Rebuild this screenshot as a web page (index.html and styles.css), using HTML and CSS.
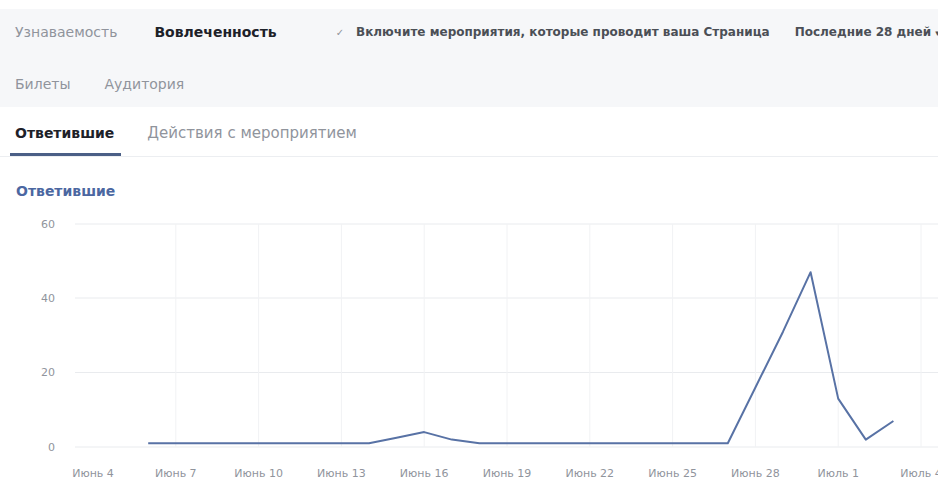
FILE: index.html
```html
<!DOCTYPE html>
<html lang="ru">
<head>
<meta charset="utf-8">
<title>Статистика мероприятий</title>
<link rel="stylesheet" href="styles.css">
</head>
<body>
<header class="insights-head">
  <div class="head-row">
    <nav class="section-nav">
      <a class="section-link">Узнаваемость</a>
      <a class="section-link is-active">Вовлеченность</a>
    </nav>
    <label class="include-toggle"><span class="check">&#10003;</span>Включите мероприятия, которые проводит ваша Страница</label>
    <span class="range-picker">Последние 28 дней <span class="caret">&#9662;</span></span>
  </div>
  <div class="head-row sub-row">
    <a class="section-link">Билеты</a>
    <a class="section-link">Аудитория</a>
  </div>
</header>

<div class="tabs">
  <span class="tab is-active">Ответившие</span>
  <span class="tab">Действия с мероприятием</span>
</div>

<h2 class="chart-title">Ответившие</h2>

<svg class="chart" viewBox="0 200 938 284" width="938" height="284">
  <g class="grid-h">
    <line x1="75" y1="224" x2="938" y2="224"/>
    <line x1="75" y1="298" x2="938" y2="298"/>
    <line x1="75" y1="372.5" x2="938" y2="372.5"/>
    <line x1="75" y1="447" x2="938" y2="447"/>
  </g>
  <g class="grid-v">
    <line x1="175.8" y1="224" x2="175.8" y2="447"/>
    <line x1="258.6" y1="224" x2="258.6" y2="447"/>
    <line x1="341.4" y1="224" x2="341.4" y2="447"/>
    <line x1="424.2" y1="224" x2="424.2" y2="447"/>
    <line x1="507" y1="224" x2="507" y2="447"/>
    <line x1="589.8" y1="224" x2="589.8" y2="447"/>
    <line x1="672.6" y1="224" x2="672.6" y2="447"/>
    <line x1="755.4" y1="224" x2="755.4" y2="447"/>
    <line x1="838.2" y1="224" x2="838.2" y2="447"/>
    <line x1="921" y1="224" x2="921" y2="447"/>
  </g>
  <g class="y-labels">
    <text x="55" y="228">60</text>
    <text x="55" y="302">40</text>
    <text x="55" y="376">20</text>
    <text x="55" y="451">0</text>
  </g>
  <g class="x-labels">
    <text x="93" y="477">Июнь 4</text>
    <text x="175.8" y="477">Июнь 7</text>
    <text x="258.6" y="477">Июнь 10</text>
    <text x="341.4" y="477">Июнь 13</text>
    <text x="424.2" y="477">Июнь 16</text>
    <text x="507" y="477">Июнь 19</text>
    <text x="589.8" y="477">Июнь 22</text>
    <text x="672.6" y="477">Июнь 25</text>
    <text x="755.4" y="477">Июнь 28</text>
    <text x="838.2" y="477">Июль 1</text>
    <text x="921" y="477">Июль 4</text>
  </g>
  <polyline class="series"
    points="148.2,443.3 369,443.3 396.6,437.7 424.2,432.1 451.8,439.6 479.4,443.3 727.8,443.3 755.4,387.5 783,331.7 810.6,272.2 838.2,398.6 865.8,439.6 893.4,421"/>
</svg>
</body>
</html>
```

FILE: styles.css
```css
* { box-sizing: border-box; }

html, body {
  margin: 0;
  padding: 0;
  background: #fff;
  width: 938px;
  height: 484px;
  overflow: hidden;
  font-family: "DejaVu Sans", "Liberation Sans", sans-serif;
  color: #1d2129;
}

a { text-decoration: none; cursor: pointer; }

/* grey header band with section switches */
.insights-head {
  margin-top: 9px;
  background: #f6f7f9;
  height: 98px;
  display: flex;
  flex-direction: column;
}

.head-row {
  display: flex;
  align-items: center;
  height: 46px;
  padding-left: 15px;
  white-space: nowrap;
}

.sub-row {
  height: 52px;
  padding-top: 6px;
  gap: 34px;
}

.section-nav {
  display: flex;
  gap: 37px;
}

.section-link {
  font-size: 14px;
  color: #90949c;
}

.section-link.is-active {
  font-size: 14px;
  font-weight: bold;
  color: #1d2129;
}

.include-toggle {
  margin-left: 59px;
  display: flex;
  align-items: center;
  font-size: 12px;
  font-weight: bold;
  color: #4b4f56;
}

.check {
  font-size: 10px;
  font-weight: normal;
  color: #90949c;
  margin-right: 12px;
}

.range-picker {
  margin-left: 25px;
  font-size: 12px;
  font-weight: bold;
  color: #4b4f56;
}

.caret { font-size: 9px; }

/* sub tabs */
.tabs {
  display: flex;
  align-items: stretch;
  height: 50px;
  border-bottom: 1px solid #eceef1;
  padding-left: 10px;
  gap: 26px;
}

.tab {
  display: flex;
  align-items: center;
  padding-top: 6px;
  font-size: 15px;
  color: #90949c;
  border-bottom: 3px solid transparent;
}

.tab.is-active {
  font-size: 14px;
  font-weight: bold;
  color: #1d2129;
  border-bottom-color: #4b5f86;
  padding-left: 5px;
  padding-right: 7px;
}

.chart-title {
  margin: 0;
  height: 43px;
  padding: 26px 0 0 16px;
  font-size: 14px;
  font-weight: bold;
  color: #4b67a1;
}

/* line chart */
.chart {
  display: block;
  font-family: "DejaVu Sans", "Liberation Sans", sans-serif;
}

.grid-h line { stroke: #e9ebee; stroke-width: 1; }
.grid-v line { stroke: #f1f2f4; stroke-width: 1; }

.y-labels text {
  font-size: 11px;
  fill: #90949c;
  text-anchor: end;
}

.x-labels text {
  font-size: 11px;
  fill: #90949c;
  text-anchor: middle;
}

.series {
  fill: none;
  stroke: #5872a5;
  stroke-width: 2;
  stroke-linejoin: round;
}
```
